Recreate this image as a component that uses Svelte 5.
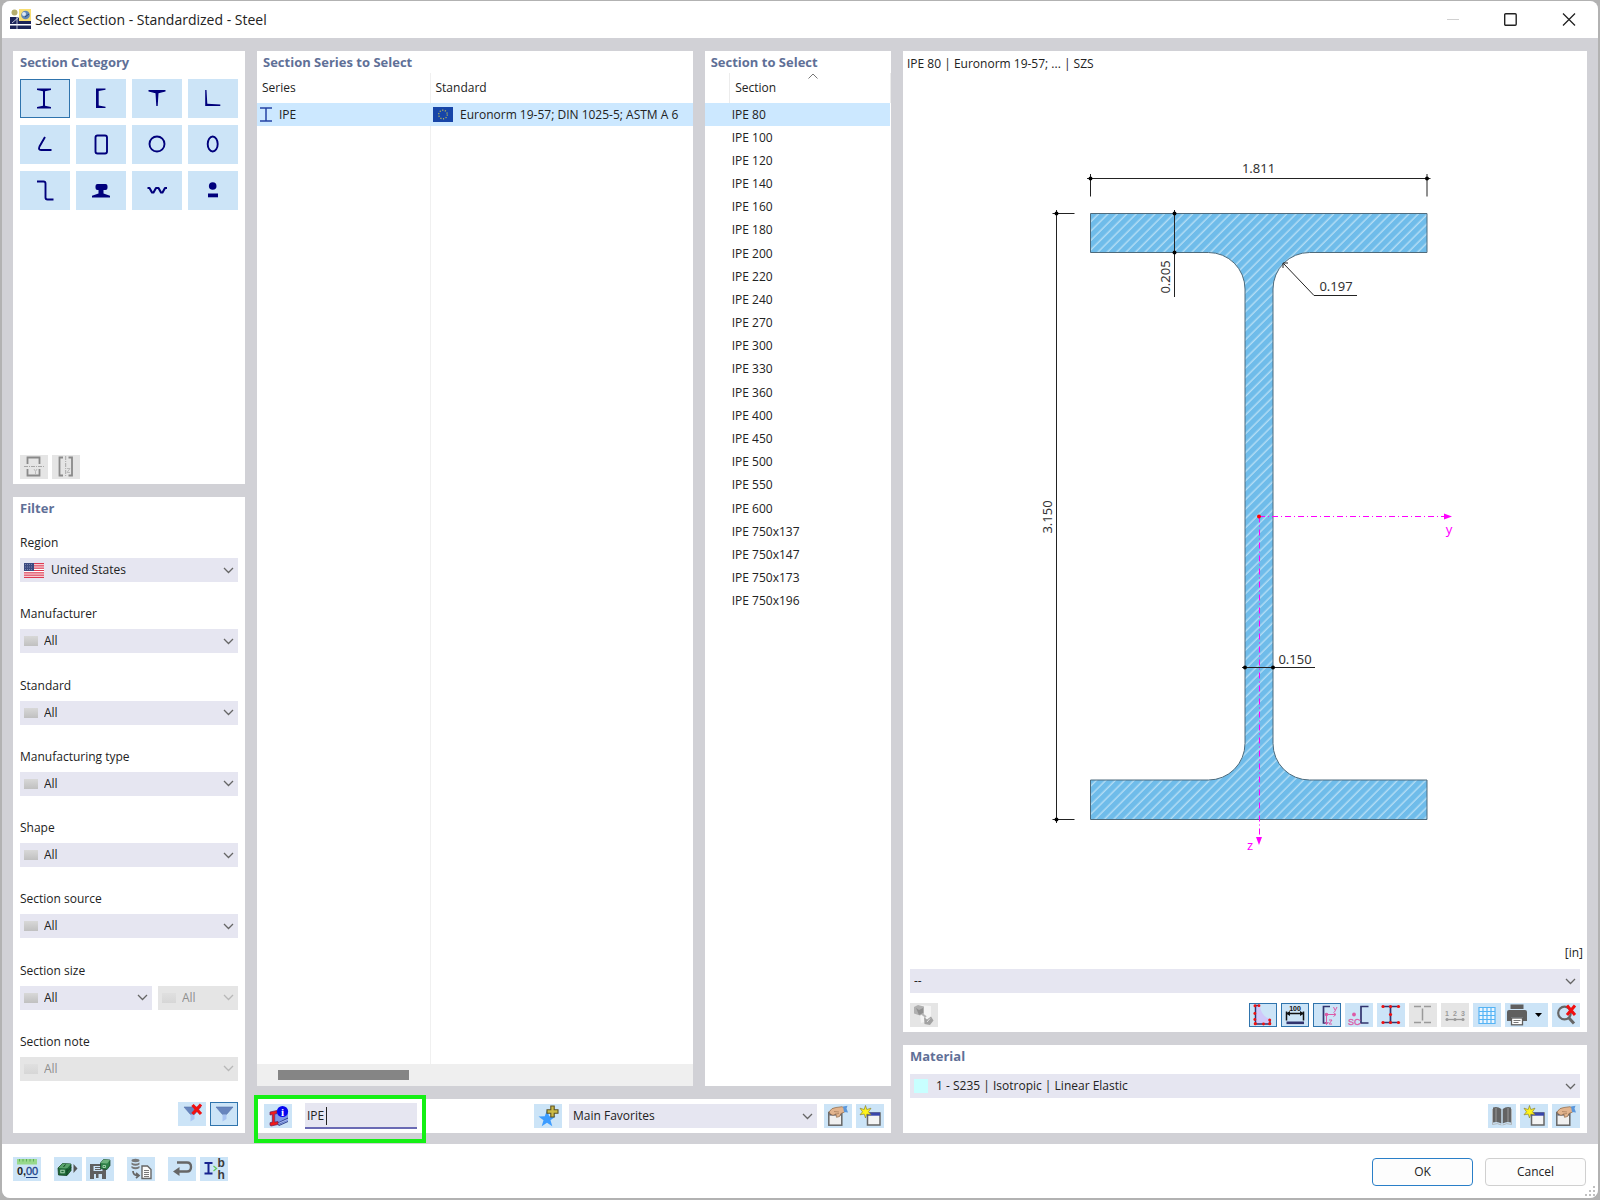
<script>
  const categories = [
    'I-sections', 'Channels', 'T-sections', 'Angles',
    'Bent angles', 'Rectangular hollow', 'Circular hollow', 'Oval hollow',
    'Z-sections', 'Rails', 'Corrugated', 'Solid sections'
  ];
  let category = $state(0);

  const filters = ['Manufacturer', 'Standard', 'Manufacturing type', 'Shape', 'Section source'];

  const sizes = [
    '80', '100', '120', '140', '160', '180', '200', '220', '240', '270', '300', '330',
    '360', '400', '450', '500', '550', '600', '750x137', '750x147', '750x173', '750x196'
  ];
  let selected = $state(0);
  let search = $state('IPE');

  const viewTools = [
    ['outline', 'Show outline', 'on'],
    ['dims', 'Show dimensions', 'on'],
    ['axes', 'Show principal axes', 'on'],
    ['shear', 'Show shear center', ''],
    ['points', 'Show stress points', ''],
    ['parts', 'Show parts', 'off'],
    ['numbers', 'Show numbering', 'off'],
    ['grid', 'Show grid', '']
  ];
</script>

{#snippet chevron()}
  <svg class="chevron" width="11" height="7" viewBox="0 0 11 7" aria-hidden="true">
    <path d="M1 1l4.500 4.500L10 1" fill="none" stroke="#666" stroke-width="1.300" />
  </svg>
{/snippet}

{#snippet categoryIcon(i)}
  <svg viewBox="0 0 50 39" width="50" height="39" fill="#00007c" aria-hidden="true">
    {#if i === 0}<path d="M17 9.500h14v1.600l-6 1.200v14.400l6 1.200v1.600h-14v-1.600l6-1.200v-14.400l-6-1.200z" />
    {:else if i === 1}<path d="M29.500 9.500v1.200l-6.800 1.300v14.500l6.800 1.300v1.200h-9.500v-19.500z" />
    {:else if i === 2}<path d="M16.500 11h17v1.400l-7 1.900-.8 12.700h-1.400l-.8-12.700-7-1.900z" />
    {:else if i === 3}<path d="M17.200 11h1.300l.8 13.800 13 .6v1.600H17.200z" />
    {:else if i === 4}<path d="M25 12l-5.500 9.500q-1.500 3.500 1.500 3.500h10.500" fill="none" stroke="#00007c" stroke-width="1.900" />
    {:else if i === 5}<rect x="19.500" y="10.500" width="11.500" height="18" rx="2" fill="none" stroke="#00007c" stroke-width="1.900" />
    {:else if i === 6}<circle cx="25" cy="19" r="7.500" fill="none" stroke="#00007c" stroke-width="1.900" />
    {:else if i === 7}<ellipse cx="24.700" cy="19" rx="5" ry="7.500" fill="none" stroke="#00007c" stroke-width="1.900" />
    {:else if i === 8}<path d="M17 10.500h6.500q2 0 2 2v14q0 2 2 2h6" fill="none" stroke="#00007c" stroke-width="1.900" />
    {:else if i === 9}<path d="M19.500 15q0-2 2-2h8q2 0 2 2v2q0 2-2 2h-2v3.500l6.500 2.200v1.800H16v-1.800l6.500-2.200V19h-1q-2 0-2-2z" />
    {:else if i === 10}<path d="M15.500 17h2l2.500 4.500h1.500l2.500-4.500h2.500l2.500 4.500h1.500l2.500-4.500h2" fill="none" stroke="#00007c" stroke-width="2.100" stroke-linejoin="round" />
    {:else}<circle cx="24.700" cy="15" r="3.800" /><rect x="20" y="22.500" width="10" height="3.800" />{/if}
  </svg>
{/snippet}

{#snippet icon(name)}
  <svg viewBox="0 0 28 24" width="28" height="24" fill="none" aria-hidden="true">
    {#if name === 'mirrorY'}
      <path d="M7.500 9V2.500h12V9M7.500 14v6.500h12V14" stroke="#8a8a8a" stroke-width="1.800" />
      <path d="M4 11.500h20" stroke="#a8a8a8" stroke-dasharray="4 1 1 1" />
      <path d="M14 14l1.500 2.500L17 14M15.500 16.500V19" stroke="#bbb" />
    {:else if name === 'mirrorZ'}
      <path d="M11 2.500H7.500v18H11M16.500 2.500H20v18h-3.500" stroke="#8a8a8a" stroke-width="1.800" />
      <path d="M13.700 1v21" stroke="#a8a8a8" stroke-dasharray="4 1 1 1" />
      <path d="M15 13.500h3l-3 4h3" stroke="#bbb" />
    {:else if name === 'filter' || name === 'filterOff'}
      <path d="M6 5h17l-6.500 7.500h-4z" fill="#6785bd" stroke="#5674ad" stroke-width=".6" />
      <path d="M12.500 12.500h4v4.500l-4 2.500z" fill="#a9c4f2" />
      {#if name === 'filterOff'}
        <path d="M14.500 3l8.500 9M23 2.500l-8.500 9.500" stroke="#f01010" stroke-width="3.200" />
      {/if}
    {:else if name === 'info'}
      <path d="M11 8l8-4 5 2v11l-9 4-4-3z" fill="#7d97e6" />
      <path d="M14 18.500l10-5v2l-10 5.500z" fill="#2d3f8c" />
      <path d="M14 21.500l10-4.500v1l-9 4z" fill="#2d3f8c" />
      <path d="M14 19.800l10-4.500" stroke="#a9bdf4" stroke-width="1.200" />
      <path d="M6 8l7-1.500v3l-2.300.6v8l3.300-.6v3l-7 1.500-1-.7v-2.600l2.300-.6v-7.500L6 11z" fill="#f01a1a" stroke="#64205a" stroke-width=".7" />
      <circle cx="18.500" cy="7.500" r="5.600" fill="#0606ee" />
      <text x="18.500" y="11.500" text-anchor="middle" font-family="Liberation Serif" font-weight="700" font-size="11" fill="#fff">i</text>
    {:else if name === 'star'}
      <path d="M13 6l2.200 6.200 6.300.2-5 3.900 1.800 6-5.300-3.500-5.300 3.500 1.800-6-5-3.900 6.300-.2z" fill="#3c9cff" />
      <path d="M16.800 2h3.400v3.800h3.800v3.400h-3.800V13h-3.400V9.200H13V5.800h3.800z" fill="#cdbb45" stroke="#5c5326" stroke-width="1.100" />
    {:else if name === 'edit'}
      <rect x="4.800" y="8.500" width="13" height="12.700" fill="#f0f0f0" stroke="#666" stroke-width="1.500" />
      <rect x="5.500" y="9" width="11.500" height="2.500" fill="#444e66" />
      <path d="M5 8q2.500-4.500 7-4.500l6-.8 3 1.800-.3 3.500-3.700 1.500-1.500 3-3 .8-.5-3-3 1-2.500-1z" fill="#e2b48e" stroke="#8b6748" stroke-width=".7" />
      <path d="M10 7.500l5 .5M11 10l4-.5" stroke="#a37a58" stroke-width=".7" />
      <path d="M19 2.500l4.500-.8-1 2.800 1.500 4-4-.500z" fill="#5a97dc" />
    {:else if name === 'new'}
      <rect x="11.500" y="9" width="12.500" height="12" fill="#f4f4f4" stroke="#666" stroke-width="1.500" />
      <rect x="11.500" y="8.500" width="12.500" height="3.200" fill="#3946ab" />
      <path d="M9.500 1.500l1.300 4 4.200-1.300-2.500 3.600 2.500 3-4.200-.7-1.300 3.900-1.300-3.900-4.200.7 2.500-3L4 4.200l4.200 1.300z" fill="#fff31a" stroke="#8d8432" stroke-width=".7" />
    {:else if name === 'decimals'}
      <rect x="4" y="2" width="20" height="5.500" fill="#98d98c" />
      <path d="M6.500 2v2.500M10 2v2.500M13.500 2v2.500M17 2v2.500M20.500 2v2.500" stroke="#5fae58" />
      <text x="4" y="18" font-family="Liberation Sans" font-weight="700" font-size="11" fill="#222">0,</text>
      <text x="13" y="18" font-family="Liberation Sans" font-size="11" fill="#1b3f87" stroke="#1b3f87" stroke-width=".3">00</text>
      <path d="M13 20.500h11.500" stroke="#1b3f87" stroke-width="1.200" />
    {:else if name === 'load'}
      <path d="M4 11l4.500-4.500 8.500.5v6.500l-4 5-8.500-.5z" fill="#1f6b38" stroke="#123d20" stroke-width=".8" />
      <path d="M4.500 11l4-4.500 8.500.5-4 4.500z" fill="#58a36b" />
      <path d="M13 11.500v6.500M9.500 10l2-2.500M13 14.500l4-4" stroke="#0f4020" />
      <rect x="6.800" y="13.200" width="3.400" height="2.600" fill="#1f6b38" stroke="#b8e0bf" stroke-width=".9" />
      <path d="M19.500 7l4 4.500-4 4.500z" fill="#555" />
    {:else if name === 'save'}
      <path d="M4 7h14l2 2v13H4z" fill="#5f5f5f" />
      <rect x="7.500" y="9" width="9" height="5" fill="#cce4f7" />
      <path d="M9 10.500h6M9 12.500h6" stroke="#5f5f5f" />
      <rect x="8" y="17" width="8" height="5" fill="#cce4f7" /><rect x="10" y="17" width="2.500" height="4" fill="#5f5f5f" />
      <path d="M14.500 6l3-3.500 6.500.5v5.500l-3 4-6.500-.8z" fill="#2f8048" stroke="#123d20" stroke-width=".7" />
      <path d="M14.500 6l3-3.500 6.500.5-2.800 3.500z" fill="#6db17c" />
      <path d="M17 8.500h2.500v2H17z" stroke="#b8e0bf" stroke-width=".8" />
    {:else if name === 'dbDoc'}
      <ellipse cx="8.500" cy="3.500" rx="4" ry="1.700" fill="#777" />
      <path d="M4.500 5.500q4 2.500 8 0v2q-4 2.500-8 0zM4.500 9q4 2.500 8 0v2q-4 2.500-8 0z" fill="#777" />
      <path d="M6 14q0 4.500 5 4.500M9 16l3 2.500L9 21" stroke="#666" stroke-width="1.700" />
      <path d="M15 9h5.500l3.500 3.500V21.500h-9z" fill="#fafafa" stroke="#666" stroke-width="1.400" />
      <path d="M17 13.500h5M17 15.500h5M17 17.500h5M17 19.500h5" stroke="#777" />
    {:else if name === 'back'}
      <path d="M9 5.500h10q4 0 4 4.500t-4 4.500H8" stroke="#666" stroke-width="2.400" />
      <path d="M11.500 10v9l-6.500-4.500z" fill="#666" />
    {:else if name === 'params'}
      <path d="M4.500 6h8M4.500 16.500h8M8.500 6v10.500" stroke="#16238f" stroke-width="2" />
      <path d="M13.500 9l3 2.500-3 2.500" stroke="#62c95c" stroke-width="1.300" />
      <text x="17.500" y="10" font-family="Liberation Sans" font-weight="700" font-size="12" fill="#3a3a3a">b</text>
      <text x="17.500" y="22" font-family="Liberation Sans" font-weight="700" font-size="12" fill="#3a3a3a">h</text>
    {:else if name === 'render'}
      <path d="M9 2l12 1v14l-10 3z" fill="#f4f4f4" />
      <path d="M4 4l4-2 6 1.500v7l-4 2-6-2z" fill="#b0b0b0" /><path d="M6 5l3 2 4-2v5l-4 2z" fill="#8f8f8f" />
      <path d="M14 14l3 2.500 4-3 2.500 4-3.500 4.500-5.500-1z" fill="#a2a2a2" />
      <path d="M17 19l3-3.500" stroke="#e2e2e2" />
      <path d="M12 11l4 3" stroke="#b5b5b5" stroke-width="2" />
    {:else if name === 'outline'}
      <path d="M6 3h5q1 10 10 13v5H6z" fill="#cfc8fa" />
      <path d="M10 2.500H6.500V21H21v-4" stroke="#31346e" stroke-width="1.500" />
      <g fill="#f01010"><circle cx="6" cy="2.700" r="1.500" /><circle cx="10" cy="2.700" r="1.400" /><circle cx="5.800" cy="10.500" r="1.400" /><circle cx="5.800" cy="16.500" r="1.400" /><circle cx="6.300" cy="20.700" r="1.600" /><circle cx="14.500" cy="21" r="1.400" /><circle cx="20.700" cy="20.700" r="1.600" /><circle cx="20.700" cy="17" r="1.500" /></g>
    {:else if name === 'dims'}
      <text x="14" y="7.500" text-anchor="middle" font-family="Liberation Sans" font-weight="700" font-size="7" fill="#111">100</text>
      <path d="M5 10.500h18M5.500 8.500v9M22.500 8.500v9" stroke="#111" stroke-width="1.500" />
      <path d="M5 10.500l4-2.500v5zM23 10.500L19 8v5z" fill="#111" />
      <rect x="5.500" y="18.500" width="17.500" height="2.600" fill="#31346e" />
    {:else if name === 'axes'}
      <path d="M17 3.500h-6.500V20h4" stroke="#31346e" stroke-width="1.700" />
      <circle cx="13.500" cy="11.500" r="1.800" fill="#dc5aa6" />
      <path d="M13.500 11.500h9M20.500 9.500l2.500 2-2.500 2M13.500 11.500v10M11.500 19l2 2.500 2-2.500" stroke="#dc5aa6" />
      <path d="M20.500 4l1.500 3M24 4l-2.500 5M16 17h3l-3 4h3" stroke="#dc5aa6" />
    {:else if name === 'shear'}
      <path d="M23.500 3.500H16V20h7.500" stroke="#31346e" stroke-width="1.700" />
      <circle cx="9" cy="11.500" r="1.900" fill="#dc5aa6" />
      <text x="3" y="22" font-family="Liberation Sans" font-size="9" fill="#dc5aa6" stroke="#dc5aa6" stroke-width=".3">SC</text>
    {:else if name === 'points'}
      <path d="M5 3.500h17M5 19.500h17M13.500 3.500v16" stroke="#31346e" stroke-width="1.700" />
      <g fill="#f01010"><circle cx="6" cy="3.500" r="1.600" /><circle cx="13.500" cy="3.500" r="1.600" /><circle cx="21.500" cy="3.500" r="1.600" /><circle cx="13.500" cy="11.500" r="1.600" /><circle cx="6" cy="19.500" r="1.600" /><circle cx="13.500" cy="19.500" r="1.600" /><circle cx="21.500" cy="19.500" r="1.600" /></g>
    {:else if name === 'parts'}
      <path d="M5 3.500h7M15 3.500h7M5 19.500h7M15 19.500h7M13.500 5.500v12" stroke="#9a9a9a" stroke-width="1.500" />
    {:else if name === 'numbers'}
      <g font-family="Liberation Sans" font-weight="700" font-size="7" fill="#9a9a9a" text-anchor="middle"><text x="6" y="12.500">1</text><text x="14" y="12.500">2</text><text x="22" y="12.500">3</text></g>
      <path d="M5 16.500h18" stroke="#9a9a9a" stroke-width="1.300" />
      <g fill="#9a9a9a"><circle cx="6" cy="16.500" r="1.500" /><circle cx="14" cy="16.500" r="1.500" /><circle cx="22" cy="16.500" r="1.500" /></g>
    {:else if name === 'grid'}
      <rect x="6" y="4.500" width="16" height="16" fill="#eaf5ff" />
      <path d="M6 4.500h16v16H6zM10 4.500v16M14 4.500v16M18 4.500v16M6 8.500h16M6 12.500h16M6 16.500h16" stroke="#55b4f5" stroke-width="1.200" />
    {:else if name === 'print'}
      <rect x="5.500" y="1.500" width="13" height="4.500" fill="#5f5f5f" />
      <path d="M2 9q0-2 2-2h16q2 0 2 2v9h-4v-3.500H6V18H2z" fill="#5f5f5f" />
      <rect x="6.500" y="15" width="11" height="6.800" fill="#fff" stroke="#5f5f5f" stroke-width="1.300" />
      <path d="M8.500 17.500h7M8.500 19.500h5" stroke="#777" />
    {:else if name === 'zoomOff'}
      <circle cx="12.500" cy="10" r="6.300" stroke="#666" stroke-width="2.200" />
      <path d="M16.500 14.500l5.500 6" stroke="#666" stroke-width="3" />
      <path d="M15 2.500l8 9.500M23 2.500L15 12" stroke="#f01010" stroke-width="3" />
    {:else if name === 'library'}
      <path d="M5 3.500q4.500-1.500 8.300 1.500v14.500Q9.500 17 5 18.500z" fill="#636363" /><path d="M23 3.500q-4.500-1.500-8.300 1.500v14.500Q18.500 17 23 18.500z" fill="#636363" />
      <path d="M4.500 5v15.500q5-2 9 .5M23.500 5v15.500q-5-2-9 .5M8 4v14M20 4v14" stroke="#aaa" stroke-width=".8" />
    {/if}
  </svg>
{/snippet}

{#snippet tool(name, label, state = '')}
  <button class="tool" class:on={state === 'on'} disabled={state === 'off'} aria-label={label}>{@render icon(name)}</button>
{/snippet}

{#snippet allFilter(id, disabled)}
  <div class="combo" class:disabled>
    <span class="swatch"></span>
    <select {id} class="with-swatch" {disabled}><option>All</option></select>
    {@render chevron()}
  </div>
{/snippet}

<div class="screen">
  <div class="window">
    <header class="titlebar">
      <svg width="21" height="21" viewBox="0 0 21 21" aria-hidden="true">
        <circle cx="4.500" cy="3.500" r="3" fill="#b6ad6c" />
        <path d="M0 8h21v7H0z" fill="#1c2358" /><path d="M0 16.500h21V20H0z" fill="#1c2358" />
        <path d="M2 14l7-6M7 8v12" stroke="#dfe3f5" stroke-width=".8" />
        <rect x="9" y="0" width="12" height="12" fill="#f8de72" />
        <circle cx="15.500" cy="6" r="4.300" fill="#5f86b8" /><circle cx="14" cy="5" r="2" fill="#dbe8f5" />
        <path d="M15 8l4-3" stroke="#2b4778" />
      </svg>
      <h1>Select Section - Standardized - Steel</h1>
      <div class="controls">
        <button disabled aria-label="Minimize"><svg width="14" height="14" viewBox="0 0 14 14"><path d="M1 6.500h12" stroke="#d0d0d0" /></svg></button>
        <button aria-label="Maximize"><svg width="14" height="14" viewBox="0 0 14 14"><rect x=".7" y=".7" width="11.500" height="11.500" rx="1" fill="none" stroke="#222" stroke-width="1.400" /></svg></button>
        <button aria-label="Close"><svg width="14" height="14" viewBox="0 0 14 14"><path d="M1 .5l12 12M13 .5L1 12.500" stroke="#222" stroke-width="1.300" /></svg></button>
      </div>
    </header>

    <main>
      <div class="column">
        <section class="panel category">
          <h2>Section Category</h2>
          <div class="category-grid">
            {#each categories as label, i}
              <button class="tile" class:on={category === i} aria-label={label} onclick={() => (category = i)}>{@render categoryIcon(i)}</button>
            {/each}
          </div>
          <div class="tools bottom">
            {@render tool('mirrorY', 'Mirror about y', 'off')}
            {@render tool('mirrorZ', 'Mirror about z', 'off')}
          </div>
        </section>

        <section class="panel filter">
          <h2>Filter</h2>
          <div class="fields">
            <div class="field">
              <label for="region">Region</label>
              <div class="combo">
                <svg class="lead" width="20" height="15" viewBox="0 0 20 15" aria-hidden="true">
                  <rect width="20" height="15" fill="#fff" />
                  <path d="M0 .6h20M0 2.900h20M0 5.200h20M0 7.500h20M0 9.800h20M0 12.100h20M0 14.400h20" stroke="#dd3a52" stroke-width="1.200" />
                  <rect width="10" height="8" fill="#3c4a80" />
                  <path d="M1 1.500h8M1 4h8M1 6.500h8" stroke="#8b95bb" stroke-width=".8" stroke-dasharray="1 1" />
                </svg>
                <select id="region" class="with-flag"><option>United States</option></select>
                {@render chevron()}
              </div>
            </div>
            {#each filters as label, i}
              <div class="field">
                <label for="filter-{i}">{label}</label>
                {@render allFilter(`filter-${i}`, false)}
              </div>
            {/each}
            <div class="field">
              <label for="size-from">Section size</label>
              <div class="pair">
                {@render allFilter('size-from', false)}
                {@render allFilter('size-to', true)}
              </div>
            </div>
            <div class="field">
              <label for="note">Section note</label>
              {@render allFilter('note', true)}
            </div>
          </div>
          <div class="tools end">
            {@render tool('filterOff', 'Clear filter')}
            {@render tool('filter', 'Apply filter', 'on')}
          </div>
        </section>
      </div>

      <div class="column">
        <div class="lists">
          <section class="panel list">
            <h2>Section Series to Select</h2>
            <div class="viewport">
              <table class="series">
                <thead><tr><th class="first">Series</th><th>Standard</th></tr></thead>
                <tbody>
                  <tr class="selected">
                    <td><span class="cell">
                      <svg width="12" height="15" viewBox="0 0 12 15" aria-hidden="true"><path d="M0 1h12M0 14h12M6 1v13" stroke="#2443a5" stroke-width="1.500" fill="none" /></svg>
                      IPE</span></td>
                    <td><span class="cell">
                      <svg width="20" height="15" viewBox="0 0 20 15" aria-hidden="true"><rect width="20" height="15" fill="#1745a8" /><circle cx="10" cy="7.500" r="4.300" fill="none" stroke="#a5ad62" stroke-width="1.400" stroke-dasharray="1.200 1.500" /></svg>
                      Euronorm 19-57; DIN 1025-5; ASTM A 6</span></td>
                  </tr>
                  <tr class="filler"><td></td><td></td></tr>
                </tbody>
              </table>
            </div>
            <div class="scrollbar"><div class="thumb"></div></div>
          </section>

          <section class="panel list">
            <h2>Section to Select</h2>
            <table class="sections">
              <thead>
                <tr><th></th><th class="sorted"><span class="sort">
                  <span>Section</span>
                  <svg width="10" height="6" viewBox="0 0 10 6" aria-hidden="true"><path d="M.5 5.500L5 1l4.500 4.500" fill="none" stroke="#777" /></svg>
                </span></th></tr>
              </thead>
              <tbody>
                {#each sizes as size, i}
                  <tr class:selected={selected === i} onclick={() => (selected = i)}><td></td><td>IPE {size}</td></tr>
                {/each}
              </tbody>
            </table>
          </section>
        </div>

        <section class="panel searchbar">
          {@render tool('info', 'Section information')}
          <div class="search">
            <input type="text" aria-label="Search section" bind:value={search} />
            <span class="caret"></span>
          </div>
          <div class="highlight"></div>
          <div class="favorites">
            {@render tool('star', 'Add to favorites')}
            <div class="combo">
              <select aria-label="Favorites"><option>Main Favorites</option></select>
              {@render chevron()}
            </div>
            <div class="tools">
              {@render tool('edit', 'Edit favorites')}
              {@render tool('new', 'New favorites')}
            </div>
          </div>
        </section>
      </div>

      <div class="column">
        <section class="panel preview">
          <p class="caption">IPE 80 | Euronorm 19-57; ... | SZS</p>
          <svg class="drawing" viewBox="0 0 684 865" role="img" aria-label="IPE 80 cross-section">
            <defs>
              <pattern id="hatch" width="6.650" height="6.650" patternUnits="userSpaceOnUse" patternTransform="rotate(45)">
                <rect width="6.650" height="6.650" fill="#6fbcea" />
                <path d="M3 0v6.650" stroke="#dcf0fb" stroke-width=".9" />
              </pattern>
            </defs>
            <path d="M187.500 137.500H524V176.500H406.500A36.500 36.500 0 0 0 370 213V667.500A36.500 36.500 0 0 0 406.500 704H524V743.500H187.500V704H305.500A36.500 36.500 0 0 0 342 667.500V213A36.500 36.500 0 0 0 305.500 176.500H187.500Z" fill="url(#hatch)" stroke="#4f6b7c" />
            <g stroke="#222" fill="none">
              <path d="M184 102.500H527.500M187.500 98v22.500M524 98v22.500" />
              <path d="M153.500 134V747M149.500 137.500h22M149.500 743.500h22" />
              <path d="M271.500 134v87" />
              <path d="M380.500 187.500L411 219.500h43M380 192v-5h5" />
              <path d="M339 591.500h73" />
            </g>
            <g fill="#000">
              <circle cx="187.500" cy="102.500" r="2" /><circle cx="524" cy="102.500" r="2" />
              <circle cx="153.500" cy="137.500" r="2" /><circle cx="153.500" cy="743.500" r="2" />
              <circle cx="271.500" cy="137.500" r="2" /><circle cx="271.500" cy="176.500" r="2" />
              <circle cx="342" cy="591.500" r="2" /><circle cx="370" cy="591.500" r="2" />
            </g>
            <g class="dimension">
              <text x="355.500" y="97">1.811</text>
              <text x="433" y="215">0.197</text>
              <text x="392" y="588">0.150</text>
              <text transform="translate(149 441) rotate(-90)">3.150</text>
              <text transform="translate(267 201) rotate(-90)">0.205</text>
            </g>
            <g stroke="#f0f" fill="none" stroke-dasharray="6 3 1 3">
              <path d="M356 440.500H542M356.500 440.500V762" />
            </g>
            <path d="M541 437.500l8 3-8 3zM353 761h6l-3 8z" fill="#f0f" />
            <circle cx="356" cy="440.500" r="2" fill="#f00" />
            <g class="axis"><text x="546" y="458">y</text><text x="347" y="774">z</text></g>
          </svg>
          <p class="unit">[in]</p>
          <div class="combo">
            <select aria-label="Display option"><option>--</option></select>
            {@render chevron()}
          </div>
          <div class="toolbar">
            {@render tool('render', 'Rendering', 'off')}
            <div class="tools">
              {#each viewTools as [name, label, state]}
                {@render tool(name, label, state)}
              {/each}
              <button class="tool split" aria-label="Print">
                {@render icon('print')}
                <svg width="7" height="4" viewBox="0 0 7 4" aria-hidden="true"><path d="M0 0h7L3.500 4z" fill="#000" /></svg>
              </button>
              {@render tool('zoomOff', 'Reset zoom')}
            </div>
          </div>
        </section>

        <section class="panel material">
          <h2>Material</h2>
          <div class="combo">
            <span class="color"></span>
            <select aria-label="Material" class="with-color"><option>1 - S235 | Isotropic | Linear Elastic</option></select>
            {@render chevron()}
          </div>
          <div class="tools end">
            {@render tool('library', 'Material library')}
            {@render tool('new', 'New material')}
            {@render tool('edit', 'Edit material')}
          </div>
        </section>
      </div>
    </main>

    <footer>
      <div class="footer-tools">
        {@render tool('decimals', 'Units and decimal places')}
        <div class="tools">
          {@render tool('load', 'Load defaults')}
          {@render tool('save', 'Save defaults')}
        </div>
        {@render tool('dbDoc', 'Import from database')}
        <div class="tools">
          {@render tool('back', 'Reset')}
          {@render tool('params', 'Parameters')}
        </div>
      </div>
      <div class="actions">
        <button class="action primary">OK</button>
        <button class="action">Cancel</button>
      </div>
      <svg class="grip" width="12" height="12" viewBox="0 0 12 12" aria-hidden="true"><path d="M8 1h2v2H8zM4 5h2v2H4zM8 5h2v2H8zM0 9h2v2H0zM4 9h2v2H4zM8 9h2v2H8z" fill="#c0c0c0" /></svg>
    </footer>
  </div>
</div>

<style>
  :global(body) {
    background: #b2b2b2;
  }
  .screen {
    box-sizing: border-box;
    min-height: 100vh;
    padding: 1px 2px 2px;
    display: flex;
    font-family: 'Open Sans', 'Noto Sans', sans-serif;
    font-size: 12px;
    line-height: 18px;
    color: #222;
  }
  .window {
    flex: 1;
    min-width: 0;
    display: flex;
    flex-direction: column;
    background: #d1d1d6;
    border-radius: 8px;
    overflow: hidden;
  }
  button,
  select,
  input {
    box-sizing: border-box;
    margin: 0;
    padding: 0;
    border: 0;
    border-radius: 0;
    font: inherit;
    color: inherit;
    outline: none;
  }
  svg {
    display: block;
    flex: none;
  }
  h1,
  h2,
  p {
    margin: 0;
  }
  h2 {
    font-size: 13px;
    line-height: 22px;
    font-weight: 700;
    color: #5f7097;
  }

  .titlebar {
    flex: none;
    height: 37px;
    display: flex;
    align-items: center;
    gap: 4px;
    padding-left: 8px;
    background: #fff;
  }
  h1 {
    font-size: 14px;
    font-weight: 400;
    line-height: 20px;
  }
  .controls {
    margin-left: auto;
    display: flex;
  }
  .controls button {
    width: 58px;
    height: 30px;
    display: grid;
    place-items: center;
    background: none;
  }

  main {
    flex: 1;
    display: grid;
    grid-template-columns: 232px minmax(0, 634fr) minmax(0, 684fr);
    gap: 12px;
    padding: 13px 11px 11px;
  }
  .column {
    display: flex;
    flex-direction: column;
    gap: 13px;
    min-width: 0;
  }
  .panel {
    box-sizing: border-box;
    display: flex;
    flex-direction: column;
    padding: 0 7px;
    background: #fff;
  }

  .tile,
  .tool {
    display: grid;
    place-items: center;
    background: #cce4f7;
  }
  .tile {
    height: 39px;
  }
  .tool {
    flex: none;
    width: 28px;
    height: 24px;
  }
  .tool > :global(svg),
  .tile > :global(svg) {
    grid-area: 1 / 1;
  }
  .on {
    box-shadow: inset 0 0 0 1px #2f74ad;
  }
  .tool:disabled {
    background: #e5e5e5;
  }
  .tool.split {
    width: 43px;
    display: flex;
    align-items: center;
    gap: 2px;
  }
  .tools {
    display: flex;
    gap: 4px;
  }
  .end {
    justify-content: flex-end;
  }

  .category {
    flex: none;
    height: 433px;
  }
  .category-grid {
    display: grid;
    grid-template-columns: repeat(4, 1fr);
    gap: 7px 6px;
    margin-top: 6px;
  }
  .bottom {
    margin-top: auto;
    padding-bottom: 5px;
  }

  .filter {
    flex: 1;
    padding-bottom: 7px;
  }
  .fields {
    flex: 1;
    display: flex;
    flex-direction: column;
    justify-content: space-between;
    padding: 15px 0 21px;
  }
  .field {
    display: flex;
    flex-direction: column;
    gap: 6px;
  }
  .pair {
    display: grid;
    grid-template-columns: 132px 1fr;
    gap: 6px;
  }

  .combo {
    display: grid;
    align-items: center;
    height: 24px;
    background: #e6e6f1;
  }
  .combo > :global(*) {
    grid-area: 1 / 1;
  }
  .combo select {
    width: 100%;
    height: 24px;
    padding: 0 22px 0 4px;
    appearance: none;
    background: transparent;
  }
  .combo select.with-swatch {
    padding-left: 24px;
  }
  .combo select.with-flag {
    padding-left: 31px;
  }
  .combo select.with-color {
    padding-left: 26px;
  }
  .combo :global(.chevron) {
    justify-self: end;
    margin-right: 4px;
    pointer-events: none;
  }
  .lead {
    margin-left: 4px;
  }
  .swatch {
    width: 14px;
    height: 10px;
    margin-left: 4px;
    background: linear-gradient(#d8d8d8, #c0c0c0);
  }
  .color {
    width: 14px;
    height: 14px;
    margin-left: 4px;
    background: #c8ffff;
  }
  .disabled {
    background: #e5e5e5;
  }
  .disabled select {
    color: #8f8f8f;
    opacity: 1;
  }
  .disabled .swatch {
    opacity: 0.4;
  }
  .disabled :global(.chevron) {
    opacity: 0.35;
  }

  .lists {
    flex: 1;
    display: grid;
    grid-template-columns: minmax(0, 435fr) minmax(0, 186fr);
    gap: 12px;
  }
  .list {
    padding: 0;
  }
  .list h2 {
    padding: 0 6px;
  }
  .viewport {
    flex: 1;
    display: flex;
    overflow: hidden;
  }
  table {
    border-collapse: collapse;
    table-layout: fixed;
  }
  th {
    height: 30px;
    padding: 0 0 0 5px;
    font-weight: 400;
    text-align: left;
    box-sizing: border-box;
  }
  td {
    padding: 0;
    white-space: nowrap;
  }
  .selected {
    background: #cce8ff;
  }
  .series {
    flex: none;
    width: 150%;
  }
  .series .first {
    width: 173px;
    box-sizing: border-box;
  }
  .series th + th,
  .filler td + td {
    border-left: 1px solid #f0f0f0;
  }
  .series .selected td {
    height: 23px;
  }
  .cell {
    display: flex;
    align-items: center;
    gap: 7px;
    padding-left: 3px;
  }
  .scrollbar {
    flex: none;
    height: 22px;
    display: flex;
    align-items: center;
    background: #efefef;
  }
  .thumb {
    width: 30%;
    height: 10px;
    margin-left: 21px;
    background: #858585;
  }
  .sections {
    width: 100%;
    height: 540px;
  }
  .sections th:first-child {
    width: 25px;
    padding: 0;
  }
  .sections .sorted {
    border-left: 1px solid #ececec;
    border-right: 1px solid #ececec;
  }
  .sections td + td {
    padding-left: 2px;
  }
  .sort {
    display: grid;
    grid-template-columns: 1fr;
    height: 30px;
    align-items: center;
  }
  .sort > * {
    grid-area: 1 / 1;
  }
  .sort svg {
    place-self: start center;
  }

  .searchbar {
    position: relative;
    flex: none;
    height: 34px;
    flex-direction: row;
    align-items: center;
    gap: 13px;
  }
  .search {
    display: grid;
    align-items: center;
  }
  .search > * {
    grid-area: 1 / 1;
  }
  .search input {
    width: 112px;
    height: 26px;
    padding: 0 2px;
    background: #e6e6f1;
    border-bottom: 2px solid #6a6ab4;
  }
  .caret {
    width: 1px;
    height: 18px;
    margin-left: 21px;
    background: #222;
    pointer-events: none;
  }
  .search:focus-within .caret {
    visibility: hidden;
  }
  .highlight {
    position: absolute;
    inset: -4px auto -10px -3px;
    width: 164px;
    border: 4px solid #14f014;
    pointer-events: none;
  }
  .favorites {
    flex: 1;
    display: flex;
    justify-content: flex-end;
    gap: 7px;
  }
  .favorites .combo {
    width: 248px;
  }

  .preview {
    flex: 1;
    padding-bottom: 5px;
  }
  .caption {
    margin: 4px -3px 0;
  }
  .drawing {
    flex: 1 1 0;
    min-height: 0;
    width: auto;
    margin: 3px -7px 0;
  }
  .dimension,
  .axis {
    font-family: 'Noto Sans', 'Open Sans', sans-serif;
    font-size: 13px;
    text-anchor: middle;
  }
  .dimension {
    fill: #333;
  }
  .axis {
    fill: #f0f;
  }
  .unit {
    margin: 3px -3px 7px;
    text-align: right;
  }
  .toolbar {
    display: flex;
    justify-content: space-between;
    margin-top: 10px;
  }

  .material {
    flex: none;
    padding-bottom: 5px;
  }
  .material .combo {
    margin: 7px 0 6px;
  }

  footer {
    flex: none;
    box-sizing: border-box;
    position: relative;
    height: 54px;
    display: flex;
    align-items: center;
    justify-content: space-between;
    padding: 0 12px 0 11px;
    background: #fff;
  }
  .footer-tools {
    display: flex;
    gap: 13px;
    padding-bottom: 5px;
  }
  .actions {
    display: flex;
    gap: 12px;
    padding-top: 2px;
  }
  .action {
    width: 101px;
    height: 28px;
    border: 1px solid #d0d0d0;
    border-radius: 4px;
    background: #fdfdfd;
  }
  .action.primary {
    border-color: #2a7fc8;
  }
  .grip {
    position: absolute;
    right: 1px;
    bottom: 1px;
  }
</style>
